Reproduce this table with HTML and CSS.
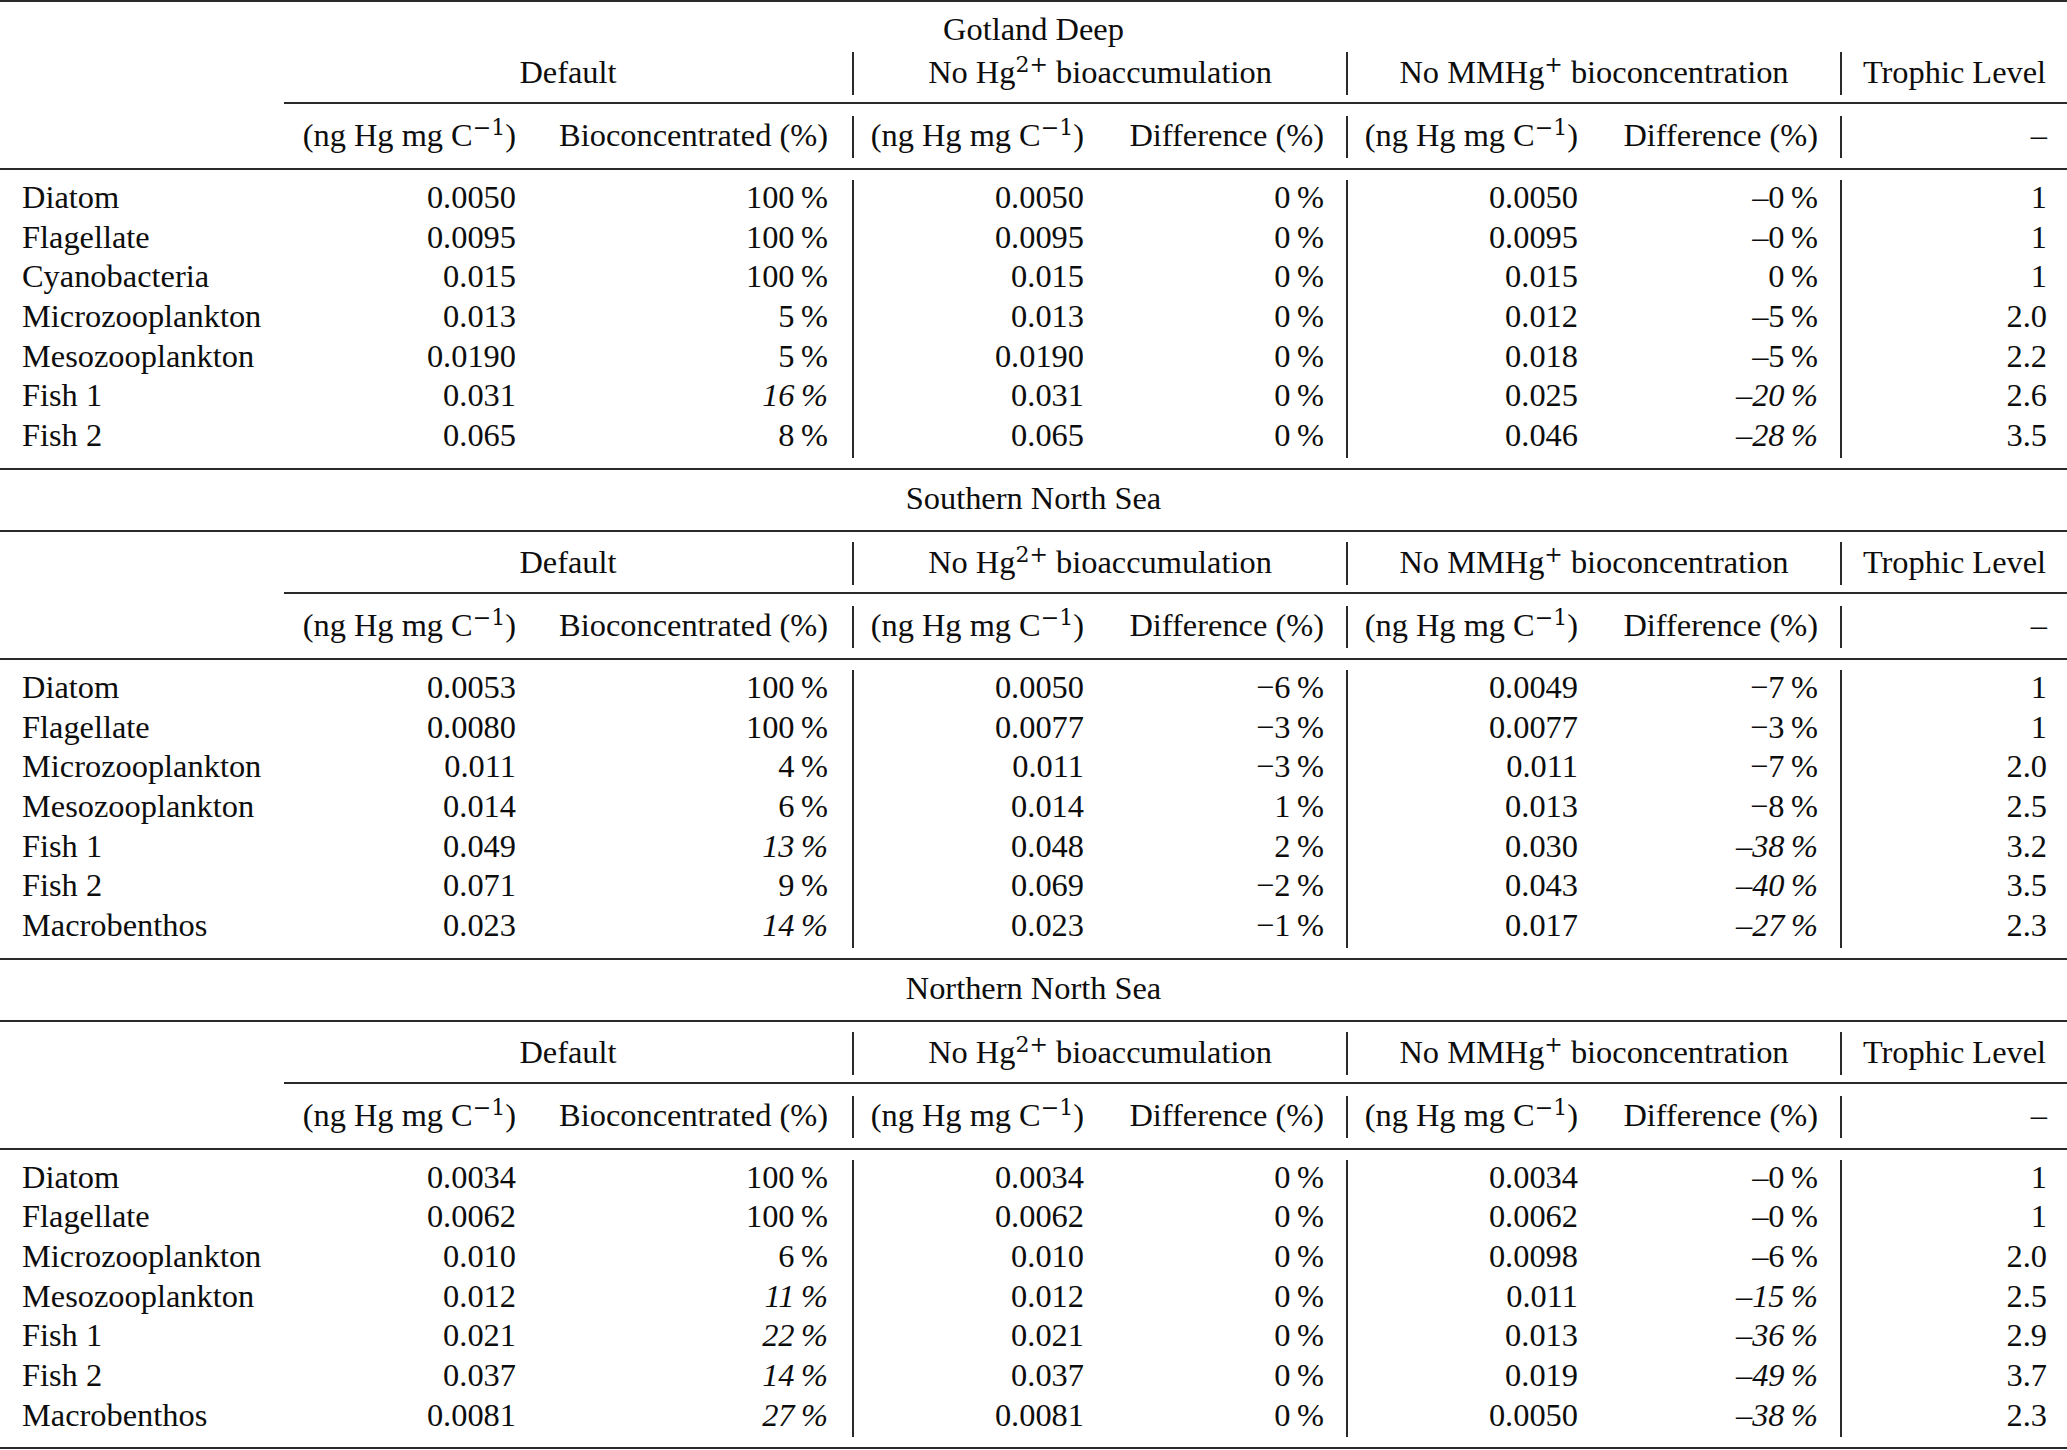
FILE: index.html
```html
<!DOCTYPE html>
<html lang="en">
<head>
<meta charset="utf-8">
<title>Hg bioaccumulation table</title>
<link rel="stylesheet" href="styles.css">
</head>
<body>
<div class="table">
  <div class="rule"></div>

  <!-- Gotland Deep -->
  <section class="sec sec-first">
    <div class="title">Gotland Deep</div>
    <div class="row groups">
      <div></div>
      <div class="g g1">Default</div>
      <div class="g g2 b">No Hg<sup>2+</sup> bioaccumulation</div>
      <div class="g g3 b">No MMHg<sup>+</sup> bioconcentration</div>
      <div class="g g4 b">Trophic Level</div>
    </div>
    <div class="prule"></div>
    <div class="row units">
      <div></div>
      <div class="n w"><span class="unit">(ng Hg mg C</span><sup>−1</sup>)</div>
      <div class="n w">Bioconcentrated (%)</div>
      <div class="n b"><span class="unit">(ng Hg mg C</span><sup>−1</sup>)</div>
      <div class="n">Difference (%)</div>
      <div class="n b"><span class="unit">(ng Hg mg C</span><sup>−1</sup>)</div>
      <div class="n">Difference (%)</div>
      <div class="n b t">–</div>
    </div>
    <div class="rule mid"></div>
    <div class="data">
      <div class="row drow"><div class="l">Diatom</div><div class="n w">0.0050</div><div class="n w">100&#8201;%</div><div class="n b">0.0050</div><div class="n">0&#8201;%</div><div class="n b">0.0050</div><div class="n">–0&#8201;%</div><div class="n b t">1</div></div>
      <div class="row drow"><div class="l">Flagellate</div><div class="n w">0.0095</div><div class="n w">100&#8201;%</div><div class="n b">0.0095</div><div class="n">0&#8201;%</div><div class="n b">0.0095</div><div class="n">–0&#8201;%</div><div class="n b t">1</div></div>
      <div class="row drow"><div class="l">Cyanobacteria</div><div class="n w">0.015</div><div class="n w">100&#8201;%</div><div class="n b">0.015</div><div class="n">0&#8201;%</div><div class="n b">0.015</div><div class="n">0&#8201;%</div><div class="n b t">1</div></div>
      <div class="row drow"><div class="l">Microzooplankton</div><div class="n w">0.013</div><div class="n w">5&#8201;%</div><div class="n b">0.013</div><div class="n">0&#8201;%</div><div class="n b">0.012</div><div class="n">–5&#8201;%</div><div class="n b t">2.0</div></div>
      <div class="row drow"><div class="l">Mesozooplankton</div><div class="n w">0.0190</div><div class="n w">5&#8201;%</div><div class="n b">0.0190</div><div class="n">0&#8201;%</div><div class="n b">0.018</div><div class="n">–5&#8201;%</div><div class="n b t">2.2</div></div>
      <div class="row drow"><div class="l">Fish 1</div><div class="n w">0.031</div><div class="n w"><i>16&#8201;%</i></div><div class="n b">0.031</div><div class="n">0&#8201;%</div><div class="n b">0.025</div><div class="n"><i>–20&#8201;%</i></div><div class="n b t">2.6</div></div>
      <div class="row drow"><div class="l">Fish 2</div><div class="n w">0.065</div><div class="n w">8&#8201;%</div><div class="n b">0.065</div><div class="n">0&#8201;%</div><div class="n b">0.046</div><div class="n"><i>–28&#8201;%</i></div><div class="n b t">3.5</div></div>
    </div>
    <div class="rule end"></div>
  </section>

  <!-- Southern North Sea -->
  <section class="sec">
    <div class="title">Southern North Sea</div>
    <div class="rule"></div>
    <div class="row groups">
      <div></div>
      <div class="g g1">Default</div>
      <div class="g g2 b">No Hg<sup>2+</sup> bioaccumulation</div>
      <div class="g g3 b">No MMHg<sup>+</sup> bioconcentration</div>
      <div class="g g4 b">Trophic Level</div>
    </div>
    <div class="prule"></div>
    <div class="row units">
      <div></div>
      <div class="n w"><span class="unit">(ng Hg mg C</span><sup>−1</sup>)</div>
      <div class="n w">Bioconcentrated (%)</div>
      <div class="n b"><span class="unit">(ng Hg mg C</span><sup>−1</sup>)</div>
      <div class="n">Difference (%)</div>
      <div class="n b"><span class="unit">(ng Hg mg C</span><sup>−1</sup>)</div>
      <div class="n">Difference (%)</div>
      <div class="n b t">–</div>
    </div>
    <div class="rule mid"></div>
    <div class="data">
      <div class="row drow"><div class="l">Diatom</div><div class="n w">0.0053</div><div class="n w">100&#8201;%</div><div class="n b">0.0050</div><div class="n">−6&#8201;%</div><div class="n b">0.0049</div><div class="n">−7&#8201;%</div><div class="n b t">1</div></div>
      <div class="row drow"><div class="l">Flagellate</div><div class="n w">0.0080</div><div class="n w">100&#8201;%</div><div class="n b">0.0077</div><div class="n">−3&#8201;%</div><div class="n b">0.0077</div><div class="n">−3&#8201;%</div><div class="n b t">1</div></div>
      <div class="row drow"><div class="l">Microzooplankton</div><div class="n w">0.011</div><div class="n w">4&#8201;%</div><div class="n b">0.011</div><div class="n">−3&#8201;%</div><div class="n b">0.011</div><div class="n">−7&#8201;%</div><div class="n b t">2.0</div></div>
      <div class="row drow"><div class="l">Mesozooplankton</div><div class="n w">0.014</div><div class="n w">6&#8201;%</div><div class="n b">0.014</div><div class="n">1&#8201;%</div><div class="n b">0.013</div><div class="n">−8&#8201;%</div><div class="n b t">2.5</div></div>
      <div class="row drow"><div class="l">Fish 1</div><div class="n w">0.049</div><div class="n w"><i>13&#8201;%</i></div><div class="n b">0.048</div><div class="n">2&#8201;%</div><div class="n b">0.030</div><div class="n"><i>–38&#8201;%</i></div><div class="n b t">3.2</div></div>
      <div class="row drow"><div class="l">Fish 2</div><div class="n w">0.071</div><div class="n w">9&#8201;%</div><div class="n b">0.069</div><div class="n">−2&#8201;%</div><div class="n b">0.043</div><div class="n"><i>–40&#8201;%</i></div><div class="n b t">3.5</div></div>
      <div class="row drow"><div class="l">Macrobenthos</div><div class="n w">0.023</div><div class="n w"><i>14&#8201;%</i></div><div class="n b">0.023</div><div class="n">−1&#8201;%</div><div class="n b">0.017</div><div class="n"><i>–27&#8201;%</i></div><div class="n b t">2.3</div></div>
    </div>
    <div class="rule end"></div>
  </section>

  <!-- Northern North Sea -->
  <section class="sec">
    <div class="title">Northern North Sea</div>
    <div class="rule"></div>
    <div class="row groups">
      <div></div>
      <div class="g g1">Default</div>
      <div class="g g2 b">No Hg<sup>2+</sup> bioaccumulation</div>
      <div class="g g3 b">No MMHg<sup>+</sup> bioconcentration</div>
      <div class="g g4 b">Trophic Level</div>
    </div>
    <div class="prule"></div>
    <div class="row units">
      <div></div>
      <div class="n w"><span class="unit">(ng Hg mg C</span><sup>−1</sup>)</div>
      <div class="n w">Bioconcentrated (%)</div>
      <div class="n b"><span class="unit">(ng Hg mg C</span><sup>−1</sup>)</div>
      <div class="n">Difference (%)</div>
      <div class="n b"><span class="unit">(ng Hg mg C</span><sup>−1</sup>)</div>
      <div class="n">Difference (%)</div>
      <div class="n b t">–</div>
    </div>
    <div class="rule mid"></div>
    <div class="data">
      <div class="row drow"><div class="l">Diatom</div><div class="n w">0.0034</div><div class="n w">100&#8201;%</div><div class="n b">0.0034</div><div class="n">0&#8201;%</div><div class="n b">0.0034</div><div class="n">–0&#8201;%</div><div class="n b t">1</div></div>
      <div class="row drow"><div class="l">Flagellate</div><div class="n w">0.0062</div><div class="n w">100&#8201;%</div><div class="n b">0.0062</div><div class="n">0&#8201;%</div><div class="n b">0.0062</div><div class="n">–0&#8201;%</div><div class="n b t">1</div></div>
      <div class="row drow"><div class="l">Microzooplankton</div><div class="n w">0.010</div><div class="n w">6&#8201;%</div><div class="n b">0.010</div><div class="n">0&#8201;%</div><div class="n b">0.0098</div><div class="n">–6&#8201;%</div><div class="n b t">2.0</div></div>
      <div class="row drow"><div class="l">Mesozooplankton</div><div class="n w">0.012</div><div class="n w"><i>11&#8201;%</i></div><div class="n b">0.012</div><div class="n">0&#8201;%</div><div class="n b">0.011</div><div class="n"><i>–15&#8201;%</i></div><div class="n b t">2.5</div></div>
      <div class="row drow"><div class="l">Fish 1</div><div class="n w">0.021</div><div class="n w"><i>22&#8201;%</i></div><div class="n b">0.021</div><div class="n">0&#8201;%</div><div class="n b">0.013</div><div class="n"><i>–36&#8201;%</i></div><div class="n b t">2.9</div></div>
      <div class="row drow"><div class="l">Fish 2</div><div class="n w">0.037</div><div class="n w"><i>14&#8201;%</i></div><div class="n b">0.037</div><div class="n">0&#8201;%</div><div class="n b">0.019</div><div class="n"><i>–49&#8201;%</i></div><div class="n b t">3.7</div></div>
      <div class="row drow"><div class="l">Macrobenthos</div><div class="n w">0.0081</div><div class="n w"><i>27&#8201;%</i></div><div class="n b">0.0081</div><div class="n">0&#8201;%</div><div class="n b">0.0050</div><div class="n"><i>–38&#8201;%</i></div><div class="n b t">2.3</div></div>
    </div>
    <div class="rule end"></div>
  </section>
</div>
</body>
</html>
```
FILE: styles.css
```css
html, body {
  margin: 0;
  padding: 0;
  background: #ffffff;
}

body {
  font-family: "Liberation Serif", "Times New Roman", serif;
  font-size: 32.4px;
  color: #0d0d0d;
}

.table {
  width: 2067px;
}

.rule {
  height: 2px;
  background: #2a2a2a;
}

.rule.mid {
  margin-top: 10px;
}

.rule.end {
  margin-top: 10px;
}

.prule {
  height: 2px;
  background: #2a2a2a;
  margin: 7px 0 12px 284px;
}

.title {
  text-align: center;
  line-height: 40px;
  padding: 8px 0 12px;
}

.sec-first .title {
  padding: 7px 0 3px;
}

.row {
  display: grid;
  grid-template-columns: 284px 256px 312px 254px 240px 254px 240px 227px;
}

.groups {
  height: 43px;
  line-height: 40px;
  margin-top: 10px;
}

.sec-first .groups {
  margin-top: 0;
}

.g {
  text-align: center;
}

.g1 { grid-column: 2 / 4; }
.g2 { grid-column: 4 / 6; }
.g3 { grid-column: 6 / 8; }
.g4 { grid-column: 8 / 9; }

.units {
  height: 42px;
  line-height: 38px;
}

.data {
  margin-top: 10px;
}

.drow {
  height: 39.7px;
  line-height: 34.5px;
}

.l {
  padding-left: 22px;
  white-space: nowrap;
}

.n {
  text-align: right;
  padding-right: 22px;
  white-space: nowrap;
}

.n.w {
  padding-right: 24px;
}

.n.t {
  padding-right: 20px;
}

.b {
  border-left: 2px solid #2a2a2a;
}

.unit {
  word-spacing: 0;
}

sup {
  font-family: "DejaVu Serif", serif;
  font-size: 0.68em;
  line-height: 0;
  vertical-align: 11px;
}

i {
  font-style: italic;
}
```
